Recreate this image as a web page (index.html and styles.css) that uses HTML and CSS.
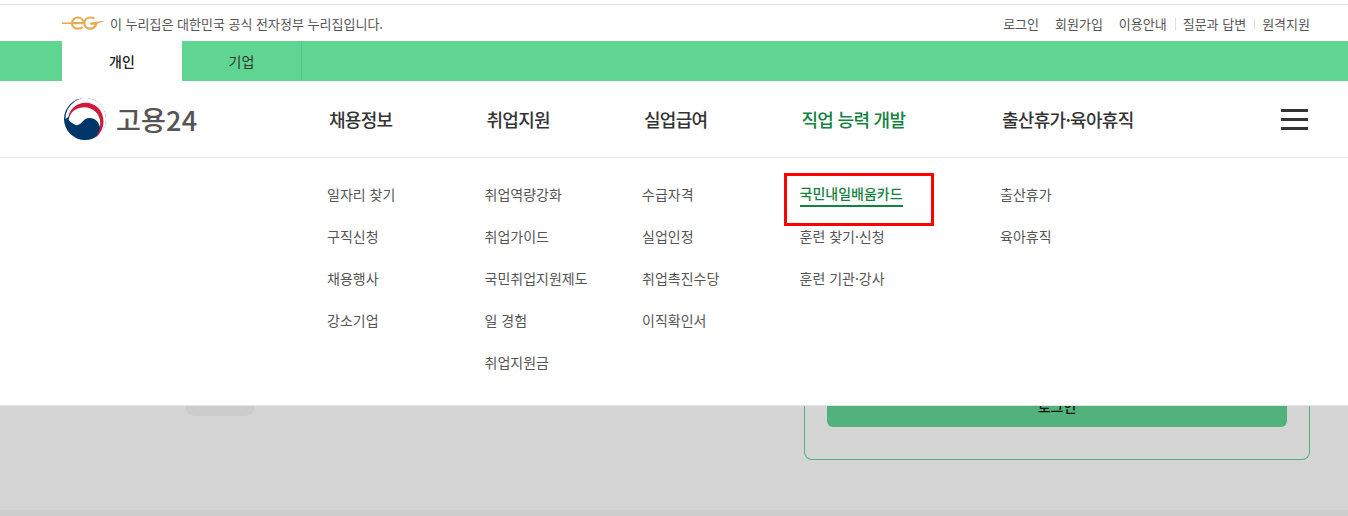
FILE: index.html
```html
<!DOCTYPE html>
<html lang="ko">
<head>
<meta charset="utf-8">
<title>고용24</title>
<link rel="stylesheet" href="styles.css">
</head>
<body>
<div class="topbar">
  <div class="gov">
    <svg class="eg" width="44" height="16" viewBox="0 0 44 16" aria-hidden="true">
      <path d="M0 8.2h14" stroke="#e8ad52" stroke-width="1.6" fill="none"/>
      <path d="M11 8.2h10.5c0-3.6-2.6-5.7-5.6-5.7-3.3 0-6 2.4-6 5.6 0 3.200 2.700 5.600 6.200 5.600 1.900 0 3.500-.5 4.900-1.500" stroke="#e8ad52" stroke-width="2.200" fill="none"/>
      <path d="M32.500 3.600c-1.300-.8-2.700-1.100-4.200-1.100-3.400 0-6 2.400-6 5.600s2.600 5.600 6 5.600c2.300 0 4-1 5-2.700l.8-2.400h-6" stroke="#e8ad52" stroke-width="2.200" fill="none"/>
      <path d="M29 7.600 44 5.400 33 9.600z" fill="#e8ad52"/>
    </svg>
    <span>이 누리집은 대한민국 공식 전자정부 누리집입니다.</span>
  </div>
  <ul class="util">
    <li><a>로그인</a></li>
    <li><a>회원가입</a></li>
    <li class="sep"><a>이용안내</a></li>
    <li class="sep"><a>질문과 답변</a></li>
    <li><a>원격지원</a></li>
  </ul>
</div>

<div class="tabs">
  <a class="tab active">개인</a>
  <a class="tab">기업</a>
</div>

<header class="header">
  <div class="logo">
    <svg width="42" height="42" viewBox="0 0 42 42" aria-hidden="true">
      <circle cx="21" cy="21" r="21" fill="#003668"/>
      <path d="M1.500 21C1.500 8 13 0 21 0c12 0 21 9.500 21 21 0 8.500-4.500 15.500-11 19 5-4.500 7.700-10 7.700-16.500C38.700 12.500 30.500 5.500 21.500 5.500 11.500 5.500 5.300 13 4.700 18.600 3.900 19.500 2.500 20.500 1.500 21z" fill="#fff"/>
      <path d="M4.600 19.800C5 11.500 12.500 4.700 21.500 4.700c10 0 18 8 18 18.500 0 6.500-3 12.500-8.300 16.500 3.600-4 5.400-9.500 5.300-14.200C36.300 15.500 29 9.400 21 9.400c-7 0-13 4-16.400 10.400z" fill="#d6173a"/>
      <path d="M4.800 21.500C6 13.500 13 9.300 20.500 9.300c8 0 15.800 6.300 15.800 15.700 0 1.600-.2 2.900-.5 4.100-.7-5-4.700-9.200-10-9.200-3.800 0-6.200 2.200-7.700 4.200-2 2.600-5.100 3.900-7.400 2.500-2.500-1.400-4.500-2.700-6.400-5.100z" fill="#fff"/>
    </svg>
    <span class="logo-text">고용24</span>
  </div>
  <nav class="gnb">
    <a>채용정보</a>
    <a>취업지원</a>
    <a>실업급여</a>
    <a class="current">직업 능력 개발</a>
    <a>출산휴가·육아휴직</a>
  </nav>
  <button class="menu-btn" aria-label="전체 메뉴"><i></i><i></i><i></i></button>
</header>

<section class="mega">
  <ul>
    <li>일자리 찾기</li>
    <li>구직신청</li>
    <li>채용행사</li>
    <li>강소기업</li>
  </ul>
  <ul>
    <li>취업역량강화</li>
    <li>취업가이드</li>
    <li>국민취업지원제도</li>
    <li>일 경험</li>
    <li>취업지원금</li>
  </ul>
  <ul>
    <li>수급자격</li>
    <li>실업인정</li>
    <li>취업촉진수당</li>
    <li>이직확인서</li>
  </ul>
  <ul>
    <li class="picked"><span>국민내일배움카드</span></li>
    <li>훈련 찾기·신청</li>
    <li>훈련 기관·강사</li>
  </ul>
  <ul>
    <li>출산휴가</li>
    <li>육아휴직</li>
  </ul>
</section>

<main class="under">
  <div class="pill"></div>
  <div class="card"><div class="login-btn">로그인</div></div>
</main>
<div class="foot"></div>
</body>
</html>
```
FILE: styles.css
```css
* { box-sizing: border-box; }
html, body { margin: 0; height: 516px; overflow: hidden; }
body {
  padding-top: 4px;
  background: #fff;
  font-family: "Noto Sans CJK KR", "Noto Sans", sans-serif;
  color: #333;
}
ul { list-style: none; margin: 0; padding: 0; }

.topbar {
  height: 37px;
  border-top: 1px solid #e2e2e2;
  padding: 0 38px 0 62px;
  display: flex;
  justify-content: space-between;
  align-items: center;
  font-size: 13px;
  color: #555;
}
.gov { display: flex; align-items: center; gap: 4px; }
.eg { display: block; }
.util { display: flex; align-items: center; }
.util li { padding-left: 16px; position: relative; }
.util li.sep + li { padding-left: 16px; }
.util li.sep + li::before {
  content: "";
  position: absolute;
  left: 8px;
  top: 4px;
  height: 12px;
  width: 1px;
  background: #ddd;
}

.tabs {
  height: 40px;
  background: #60d592;
  padding-left: 62px;
  display: flex;
}
.tab {
  width: 120px;
  display: flex;
  align-items: center;
  justify-content: center;
  font-size: 14px;
  color: #333;
  border-right: 1px solid #57c486;
}
.tab.active { background: #fff; color: #222; font-weight: 500; border-right: 0; }

.header {
  height: 77px;
  border-bottom: 1px solid #ececec;
  padding: 0 40px 0 64px;
  display: flex;
  align-items: center;
}
.logo { width: 263px; display: flex; align-items: center; gap: 10px; }
.logo svg { display: block; }
.logo-text { font-size: 27px; font-weight: 500; color: #555; line-height: 1; letter-spacing: .2px; }
.gnb {
  flex: 1;
  display: grid;
  grid-template-columns: 157.5px 157.5px 157.5px 200.5px auto;
  padding-left: 2px;
  font-size: 18px;
  font-weight: 500;
  letter-spacing: -.7px;
  color: #333;
}
.gnb .current { color: #14823f; }
.menu-btn {
  width: 27px;
  padding: 0;
  border: 0;
  background: none;
  display: flex;
  flex-direction: column;
  gap: 6px;
}
.menu-btn i { display: block; height: 3px; background: #333; }

.mega {
  height: 248px;
  padding: 15px 0 0 327px;
  display: grid;
  grid-template-columns: 157.5px 157.5px 157.5px 200.5px auto;
  border-bottom: 1px solid #e4e4e4;
  font-size: 14px;
  color: #555;
  position: relative;
  z-index: 1;
  background: #fff;
}
.mega li { height: 42px; display: flex; align-items: center; }
.mega .picked { position: relative; color: #14823f; font-weight: 500; }
.mega .picked span { border-bottom: 2px solid #14823f; line-height: 20px; padding-bottom: 2px; margin-top: 2px; }
.mega .picked::after {
  content: "";
  position: absolute;
  left: -16px;
  top: 0;
  width: 144px;
  height: 47px;
  border: 3px solid #f00;
}

.under {
  height: 104px;
  background: #d5d5d5;
  padding: 0 38px 0 185px;
  display: flex;
  justify-content: space-between;
  align-items: flex-start;
  overflow: hidden;
}
.pill { width: 70px; height: 10px; background: #ccc; border-radius: 0 0 12px 12px; }
.card {
  width: 506px;
  height: 54px;
  border: 1px solid #4fb37a;
  border-top: 0;
  border-radius: 0 0 8px 8px;
  padding: 0 22px;
}
.login-btn {
  height: 21px;
  background: #52b27b;
  border-radius: 0 0 6px 6px;
  color: #111;
  font-size: 14px;
  font-weight: 500;
  text-align: center;
  line-height: 0;
  padding-top: 0;
}
.foot { height: 8px; background: #cdcdcd; }
```
